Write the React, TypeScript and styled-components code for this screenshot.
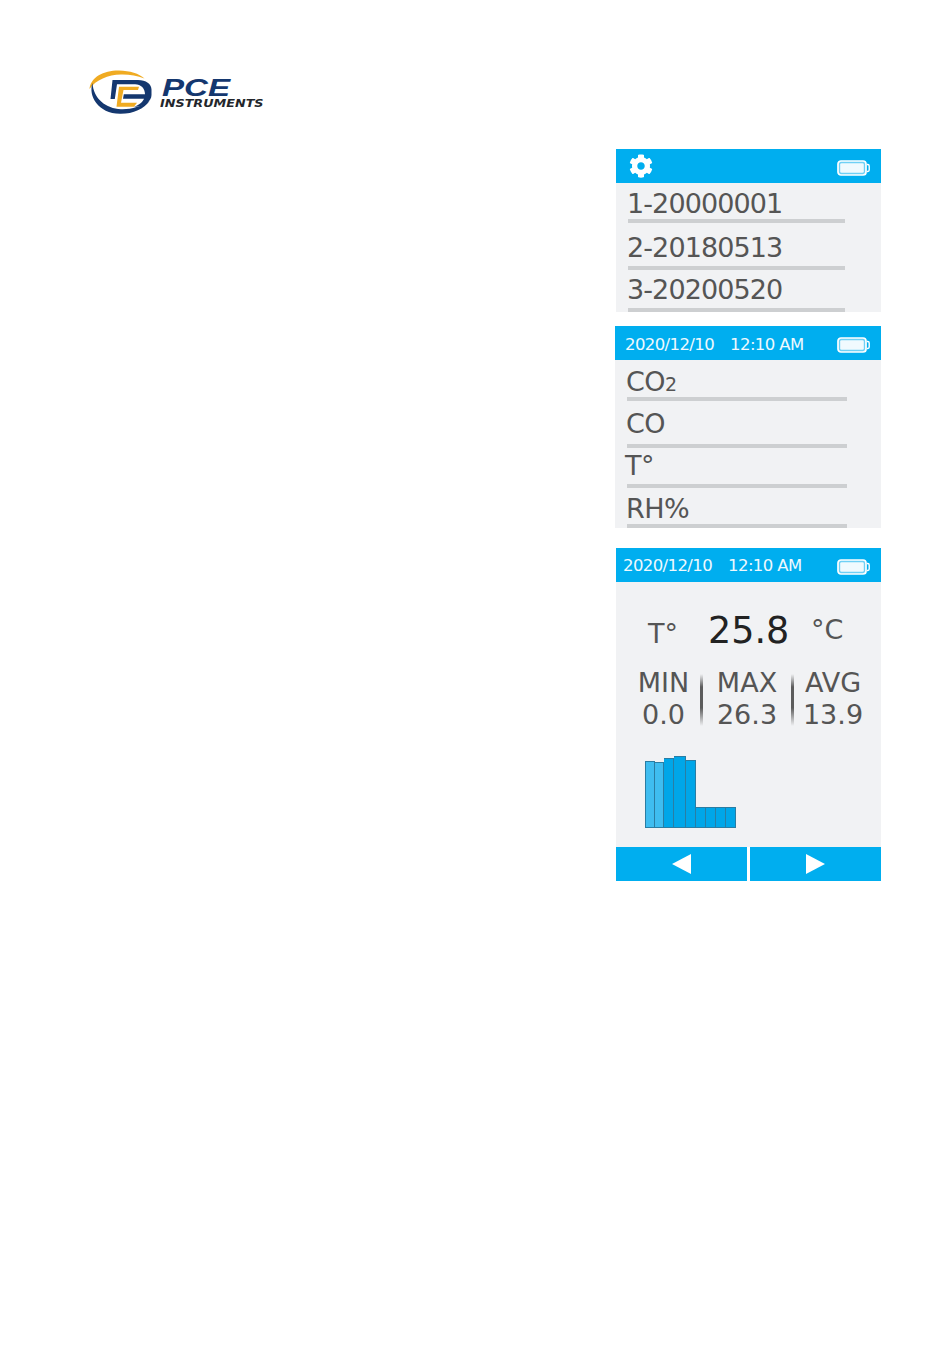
import React from 'react';
import styled, { createGlobalStyle } from 'styled-components';
import { FaCog } from 'react-icons/fa';

const GlobalStyle = createGlobalStyle`
  html, body {
    margin: 0;
    padding: 0;
    background: #fff;
  }
`;

const Page = styled.div`
  width: 950px;
  height: 1364px;
  overflow: hidden;
  display: flex;
  flex-direction: column;
  padding: 68px 69px 0 88px;
  box-sizing: border-box;
  font-family: "DejaVu Sans", Verdana, sans-serif;
  color: #555;
`;

const Logo = styled.div`
  display: flex;
  height: 48px;
`;

const Emblem = styled.svg`
  width: 66px;
  height: 48px;
  flex: none;
`;

const Wordmark = styled.div`
  display: flex;
  flex-direction: column;
  margin-left: 6px;
  padding-top: 10px;
`;

const Brand = styled.span`
  font-family: "Liberation Sans", Arial, sans-serif;
  font-weight: 700;
  font-style: italic;
  font-size: 23px;
  line-height: 20px;
  height: 20px;
  margin-left: 2px;
  color: #14376f;
  transform: scaleX(1.44);
  transform-origin: left center;
`;

const Tagline = styled.span`
  font-weight: 700;
  font-style: italic;
  font-size: 10.3px;
  line-height: 10px;
  color: #23262b;
  transform: scaleX(1.24);
  transform-origin: left center;
`;

const Screens = styled.div`
  display: flex;
  flex-direction: column;
  align-items: flex-end;
  margin-top: 33px;
`;

const Screen = styled.section<{ $width: number; $height: number; $gap?: number }>`
  width: ${p => p.$width}px;
  height: ${p => p.$height}px;
  margin-bottom: ${p => p.$gap ?? 0}px;
  background: #f1f2f4;
  display: flex;
  flex-direction: column;
  overflow: hidden;
`;

const Header = styled.header<{ $left: number }>`
  height: 34px;
  flex: none;
  background: #00aeef;
  display: flex;
  align-items: center;
  justify-content: space-between;
  padding: 0 11px 0 ${p => p.$left}px;
  color: #fff;
`;

const Clock = styled.div<{ $drop: number }>`
  display: flex;
  gap: 16px;
  font-size: 16.5px;
  letter-spacing: -0.6px;
  padding-top: ${p => p.$drop}px;
  color: #eef9fe;
`;

const Gear = styled(FaCog)`
  width: 24px;
  height: 24px;
  color: #fff;
`;

const BatteryIcon = styled.svg`
  width: 33px;
  height: 16px;
  flex: none;
  margin-top: 3px;
`;

const Battery = () => (
  <BatteryIcon viewBox="0 0 33 16">
    <rect x="1" y="1" width="28" height="14" rx="3" fill="#6fd0f5" stroke="#fff" strokeWidth="1.7" />
    <rect x="3.2" y="3.2" width="23.6" height="9.6" rx="1.4" fill="#f0fafe" />
    <path d="M30 4.5h.8a1.4 1.4 0 0 1 1.4 1.4v4.2a1.4 1.4 0 0 1-1.4 1.4H30" fill="none" stroke="#fff" strokeWidth="1.4" />
  </BatteryIcon>
);

const Row = styled.div<{ $height: number }>`
  height: ${p => p.$height}px;
  flex: none;
  display: flex;
  flex-direction: column;
  justify-content: flex-end;
`;

const Label = styled.div<{ $gap: number; $spacing: number; $left: number }>`
  font-size: 27px;
  line-height: 1;
  letter-spacing: ${p => p.$spacing}px;
  margin: 0 0 ${p => p.$gap}px ${p => p.$left}px;
  color: #555;
  white-space: nowrap;
`;

const Rule = styled.div<{ $left: number; $width: number }>`
  width: ${p => p.$width}px;
  height: 3.6px;
  flex: none;
  margin-left: ${p => p.$left}px;
  background: #cdcfd1;
`;

const Sub = styled.span`
  font-size: 19px;
`;

const Reading = styled.div`
  display: flex;
  align-items: baseline;
  padding-left: 32px;
  margin-top: 32px;
  height: 34px;
`;

const ReadingName = styled.span`
  font-size: 27px;
  line-height: 34px;
  width: 60px;
`;

const ReadingValue = styled.span`
  font-size: 36.5px;
  line-height: 34px;
  color: #222;
  width: 103px;
`;

const ReadingUnit = styled.span`
  font-size: 27px;
  line-height: 34px;
  position: relative;
  top: -4px;
`;

const Stats = styled.div`
  display: grid;
  grid-template-columns: 73px 3px 88px 3px 78px;
  padding-left: 11px;
  margin-top: 19px;
  height: 61px;
`;

const Stat = styled.div`
  display: flex;
  flex-direction: column;
  align-items: center;
  font-size: 27px;
  line-height: 32px;
  color: #555;
  white-space: nowrap;
`;

const Divider = styled.div`
  margin: 7px 0 0;
  height: 52px;
  background: linear-gradient(to bottom, rgba(90, 90, 90, 0), #5c5c5c 25%, #5c5c5c 65%, rgba(90, 90, 90, 0));
`;

const Chart = styled.div`
  display: flex;
  align-items: flex-end;
  height: 72px;
  margin: 28px 0 0 29px;
`;

const Bar = styled.div<{ $width: number; $height: number; $light?: boolean }>`
  width: ${p => p.$width}px;
  height: ${p => p.$height}px;
  box-sizing: border-box;
  background: ${p => (p.$light ? '#3fbdf0' : '#00a6e8')};
  border: 1px solid #2a7da3;
  border-left-width: 0;

  &:first-child {
    border-left-width: 1px;
  }
`;

const Nav = styled.nav`
  margin-top: auto;
  height: 34px;
  flex: none;
  display: flex;
  justify-content: space-between;
  background: #fff;
`;

const NavButton = styled.button`
  width: 131px;
  border: 0;
  padding: 0;
  background: #00aeef;
  display: flex;
  align-items: center;
  justify-content: center;
`;

const Arrow = styled.span<{ $dir: 'left' | 'right' }>`
  width: 0;
  height: 0;
  border-top: 10.5px solid transparent;
  border-bottom: 10.5px solid transparent;
  ${p => (p.$dir === 'left' ? 'border-right: 19px solid #fff;' : 'border-left: 19px solid #fff;')}
`;

const logs = [
  { text: '1-20000001', height: 40, gap: 2.5 },
  { text: '2-20180513', height: 47, gap: 5.7 },
  { text: '3-20200520', height: 42, gap: 5.8 },
];

const channels = [
  { key: 'co2', text: <>CO<Sub>2</Sub></>, height: 41, gap: 2.5, left: 11 },
  { key: 'co', text: 'CO', height: 47, gap: 7.2, left: 11 },
  { key: 't', text: 'T°', height: 40, gap: 5.2, left: 10 },
  { key: 'rh', text: 'RH%', height: 40, gap: 2.9, left: 11 },
];

const stats = [
  { name: 'MIN', value: '0.0' },
  { name: 'MAX', value: '26.3' },
  { name: 'AVG', value: '13.9' },
];

const bars = [
  { w: 10, h: 67, light: true },
  { w: 9, h: 66, light: true },
  { w: 10, h: 70 },
  { w: 12, h: 72 },
  { w: 10, h: 68 },
  { w: 10, h: 21 },
  { w: 10, h: 21 },
  { w: 10, h: 21 },
  { w: 10, h: 21 },
];

const App: React.FC = () => {
  return (
    <Page>
      <GlobalStyle />
      <Logo>
        <Emblem viewBox="0 0 66 48">
          <path d="M1.5 21C2.5 9 16 2.2 31 2.4 42 2.6 51 5.4 56.5 10.5 49 7.4 41 6.2 33 6.4 20 6.8 8 11.5 1.5 21z" fill="#f0ab22" />
          <path d="M4.5 15C0 28 10 45.4 32 45.8 45 46 56 41 61.5 33 53 38.5 43 41.6 33 41.2 18 40.6 5.5 31 4.5 15z" fill="#14376f" />
          <path d="M24.5 12H50C58 12 63.5 16 63.5 21.5V27C63.5 33 57 38.8 47 38.8H46C52 36.5 55 33.5 56 30.7H35L35.8 26.3H57C57 20.5 53 16.3 47 16.3H29L26.8 31H22.5z" fill="#14376f" />
          <path d="M31 18.7H51L50 22H35.5L33 34.7H49L46 38.7H28.5z" fill="#f0ab22" />
        </Emblem>
        <Wordmark>
          <Brand>PCE</Brand>
          <Tagline>INSTRUMENTS</Tagline>
        </Wordmark>
      </Logo>

      <Screens>
        <Screen $width={265} $height={163} $gap={14}>
          <Header $left={13}>
            <Gear />
            <Battery />
          </Header>
          {logs.map(row => (
            <Row key={row.text} $height={row.height}>
              <Label $gap={row.gap} $spacing={-0.9} $left={11}>{row.text}</Label>
              <Rule $left={12} $width={217} />
            </Row>
          ))}
        </Screen>

        <Screen $width={266} $height={202} $gap={20}>
          <Header $left={10}>
            <Clock $drop={3}><span>2020/12/10</span><span>12:10 AM</span></Clock>
            <Battery />
          </Header>
          {channels.map(row => (
            <Row key={row.key} $height={row.height}>
              <Label $gap={row.gap} $spacing={-0.5} $left={row.left}>{row.text}</Label>
              <Rule $left={12} $width={220} />
            </Row>
          ))}
        </Screen>

        <Screen $width={265} $height={333}>
          <Header $left={7}>
            <Clock $drop={1}><span>2020/12/10</span><span>12:10 AM</span></Clock>
            <Battery />
          </Header>
          <Reading>
            <ReadingName>T°</ReadingName>
            <ReadingValue>25.8</ReadingValue>
            <ReadingUnit>°C</ReadingUnit>
          </Reading>
          <Stats>
            {stats.map((s, i) => (
              <React.Fragment key={s.name}>
                {i > 0 && <Divider />}
                <Stat><span>{s.name}</span><span>{s.value}</span></Stat>
              </React.Fragment>
            ))}
          </Stats>
          <Chart>
            {bars.map((b, i) => (
              <Bar key={i} $width={b.w} $height={b.h} $light={b.light} />
            ))}
          </Chart>
          <Nav>
            <NavButton aria-label="previous"><Arrow $dir="left" /></NavButton>
            <NavButton aria-label="next"><Arrow $dir="right" /></NavButton>
          </Nav>
        </Screen>
      </Screens>
    </Page>
  );
};

export default App;
